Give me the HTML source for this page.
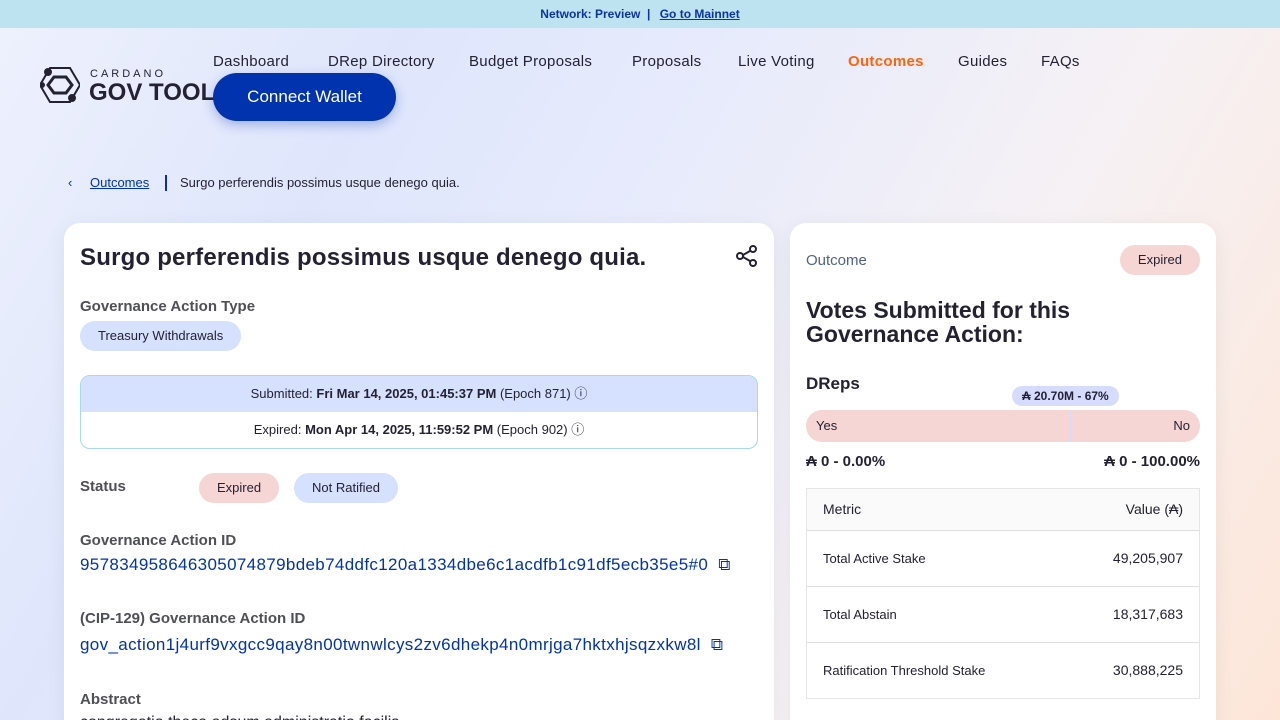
<!DOCTYPE html>
<html style="width:1280px;height:720px;overflow:hidden"><head><meta charset="utf-8"><style>
*{box-sizing:border-box;margin:0;padding:0}
body{width:1280px;height:720px;overflow:hidden;font-family:"Liberation Sans","DejaVu Sans",sans-serif;color:#242232;
background:linear-gradient(120deg,#eef1fd 0%,#dfe6fc 25%,#e7ebfc 45%,#f6f1f4 70%,#fde6d8 100%);position:relative}
.top{height:28px;background:#bde3f0;text-align:center;font-size:12px;font-weight:bold;color:#0a33a8;line-height:28px}
.top u{margin-left:6px}
.abs{position:absolute}
.nav{top:53px;font-size:15px;color:#242232;letter-spacing:.3px}
.btn{left:213px;top:73px;width:183px;height:48px;border-radius:24px;background:#0033ad;color:#fff;font-size:17px;text-align:center;line-height:48px;box-shadow:0 4px 12px rgba(0,51,173,.3)}
.card{background:#fff;border-radius:16px;box-shadow:0 4px 20px rgba(0,0,0,.06)}
.lbl{font-size:15px;font-weight:bold;color:#4f4f56}
.pill{display:inline-block;border-radius:15px;font-size:13px;padding:0 18px;height:30px;line-height:30px}
.blue{background:#d6e0ff}.red{background:#f6d5d5}
.link{color:#0033ad;font-size:17px;letter-spacing:.35px}
table{border-collapse:collapse;width:100%}
</style></head><body>
<div class="top">Network: Preview &nbsp;| <u>Go to Mainnet</u></div>
<svg class="abs" style="left:40px;top:66px" width="40" height="38" viewBox="0 0 40 38" fill="none" stroke="#242232" stroke-width="2"><path d="M10 2h20l10 17-10 17H10L0 19z"/><path d="M14 11h12l6 8-6 8H14l-6-8z" stroke-width="3"/><circle cx="8" cy="6" r="3" fill="#242232"/><circle cx="32" cy="32" r="3" fill="#242232"/><circle cx="2" cy="19" r="2" fill="#242232"/></svg>
<div class="abs" style="left:90px;top:68px;font-size:11px;letter-spacing:3px">CARDANO</div>
<div class="abs" style="left:89px;top:79px;font-size:24px;font-weight:bold">GOV TOOL</div>
<div class="abs nav" style="left:213px">Dashboard</div>
<div class="abs nav" style="left:328px">DRep Directory</div>
<div class="abs nav" style="left:469px">Budget Proposals</div>
<div class="abs nav" style="left:632px">Proposals</div>
<div class="abs nav" style="left:738px">Live Voting</div>
<div class="abs nav" style="left:848px;color:#ff640a;font-weight:bold">Outcomes</div>
<div class="abs nav" style="left:958px">Guides</div>
<div class="abs nav" style="left:1041px">FAQs</div>
<div class="abs btn">Connect Wallet</div>
<div class="abs" style="left:68px;top:175px;font-size:13px;color:#0033ad">‹</div>
<div class="abs" style="left:90px;top:175px;font-size:13px;color:#0033ad"><u>Outcomes</u></div>
<div class="abs" style="left:165px;top:175px;width:2px;height:16px;background:#0033ad"></div>
<div class="abs" style="left:180px;top:175px;font-size:13px">Surgo perferendis possimus usque denego quia.</div>

<div class="abs card" style="left:64px;top:223px;width:710px;height:520px;padding:0 16px">
<div style="margin-top:21px;font-size:24px;font-weight:bold;letter-spacing:.2px">Surgo perferendis possimus usque denego quia.</div>
<svg class="abs" style="right:16px;top:22px" width="22" height="22" viewBox="0 0 22 22" fill="none" stroke="#242232" stroke-width="2"><circle cx="17" cy="4" r="3"/><circle cx="4" cy="11" r="3"/><circle cx="17" cy="18" r="3"/><path d="M7 10l7-4M7 12l7 4"/></svg>
<div class="lbl" style="margin-top:26px">Governance Action Type</div>
<div class="pill blue" style="margin-top:6px">Treasury Withdrawals</div>
<div style="margin-top:24px;border:1px solid #a9d8e8;border-radius:10px;overflow:hidden;font-size:13px;text-align:center">
<div style="background:#d6e0ff;height:36px;line-height:36px">Submitted: <b>Fri Mar 14, 2025, 01:45:37 PM</b> (Epoch 871) ⓘ</div>
<div style="height:36px;line-height:36px">Expired: <b>Mon Apr 14, 2025, 11:59:52 PM</b> (Epoch 902) ⓘ</div></div>
<div style="margin-top:24px;position:relative;height:30px"><span class="lbl" style="position:absolute;top:5px">Status</span>
<span class="pill red" style="position:absolute;left:119px">Expired</span><span class="pill blue" style="position:absolute;left:214px">Not Ratified</span></div>
<div class="lbl" style="margin-top:29px">Governance Action ID</div>
<div class="link" style="margin-top:6px">957834958646305074879bdeb74ddfc120a1334dbe6c1acdfb1c91df5ecb35e5#0 &nbsp;⧉</div>
<div class="lbl" style="margin-top:35px">(CIP-129) Governance Action ID</div>
<div class="link" style="margin-top:8px">gov_action1j4urf9vxgcc9qay8n00twnwlcys2zv6dhekp4n0mrjga7hktxhjsqzxkw8l &nbsp;⧉</div>
<div class="lbl" style="margin-top:36px">Abstract</div>
<div style="margin-top:6px;font-size:16px">congregatio theca adsum administratio facilis</div>
</div>

<div class="abs card" style="left:790px;top:223px;width:426px;height:520px;padding:0 16px">
<div style="margin-top:22px;height:30px;position:relative"><span style="color:#506288;font-size:15px;position:absolute;top:7px">Outcome</span><span class="pill red" style="position:absolute;right:0">Expired</span></div>
<div style="margin-top:23px;font-size:23px;font-weight:bold;line-height:24px">Votes Submitted for this Governance Action:</div>
<div style="margin-top:28px;font-size:17px;font-weight:bold">DReps</div>
<div style="position:relative;margin-top:16px;height:32px;background:#f6d5d5;border-radius:16px;font-size:13px;line-height:32px;padding:0 10px">Yes<span style="float:right">No</span>
<div class="abs" style="left:263px;top:0;width:2px;height:32px;background:#d6dcff"></div>
<div class="abs" style="left:206px;top:-24px;height:20px;line-height:20px;padding:0 10px;border-radius:10px;background:#d6dcff;font-size:12px;font-weight:bold">₳ 20.70M - 67%</div></div>
<div style="margin-top:11px;font-size:15px;font-weight:bold">₳ 0 - 0.00%<span style="float:right">₳ 0 - 100.00%</span></div>
<div style="margin-top:18px;border:1px solid #e5e5e5">
<table style="font-size:14px">
<tr style="background:#fafafa;height:41px;border-bottom:1px solid #e0e0e0"><td style="padding-left:16px">Metric</td><td style="text-align:right;padding-right:16px">Value (₳)</td></tr>
<tr style="height:56px;border-bottom:1px solid #e0e0e0"><td style="padding-left:16px;font-size:13px">Total Active Stake</td><td style="text-align:right;padding-right:16px">49,205,907</td></tr>
<tr style="height:56px;border-bottom:1px solid #e0e0e0"><td style="padding-left:16px;font-size:13px">Total Abstain</td><td style="text-align:right;padding-right:16px">18,317,683</td></tr>
<tr style="height:56px"><td style="padding-left:16px;font-size:13px">Ratification Threshold Stake</td><td style="text-align:right;padding-right:16px">30,888,225</td></tr>
</table></div>
</div>
</body></html>
